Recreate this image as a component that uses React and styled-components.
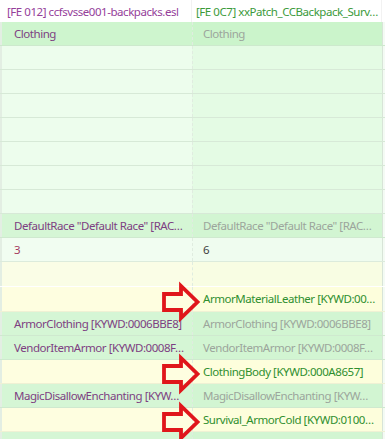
import React from "react";
import styled, { createGlobalStyle, css } from "styled-components";

const Global = createGlobalStyle`
  html, body { margin: 0; padding: 0; background: #ffffff; }
  body { font-family: "Noto Sans", "Open Sans", sans-serif; }
`;

const Table = styled.div`
  position: relative;
  width: 385px;
  height: 439px;
  overflow: hidden;
  background: #ffffff;
`;

const HeaderRow = styled.div`
  display: grid;
  grid-template-columns: 192px 190px 3px;
  height: 22px;
  background: #ffffff;
`;

const HeaderCell = styled.div`
  padding: 4px 0 0 ${(p) => p.$pad}px;
  font-size: 11.5px;
  letter-spacing: -0.45px;
  line-height: 16px;
  white-space: nowrap;
  overflow: hidden;
  color: ${(p) => (p.$side === "left" ? "#95409a" : "#3b9a3b")};
  border-right: 1px solid #f2f2f2;
`;

const tones = {
  clothing: css`
    --lbg: #cef5ce;
    --rbg: #cbf4cb;
    --line: #cde9cd;
  `,
  empty: css`
    --lbg: #edfded;
    --rbg: #e4fbe4;
    --line: #d7e9d7;
  `,
  green: css`
    --lbg: #d5f6d5;
    --rbg: #d2f5d2;
    --line: #cfe9cf;
  `,
  pale: css`
    --lbg: #f1fdf1;
    --rbg: #effcef;
    --line: #dcebdc;
  `,
  yellowTop: css`
    --lbg: #fafde6;
    --rbg: #f8fde3;
    --line: transparent;
  `,
  yellow: css`
    --lbg: #fefee0;
    --rbg: #fdfedc;
    --line: #eff1d4;
  `,
};

const Row = styled.div`
  ${(p) => tones[p.$tone]}
  position: relative;
  display: grid;
  grid-template-columns: 192px 190px 3px;
  height: ${(p) => p.$h}px;
  box-sizing: border-box;
  border-bottom: 1px solid var(--line);
`;

const Cell = styled.div`
  background: var(--lbg);
  padding-left: ${(p) => p.$pad}px;
  font-size: 11.5px;
  letter-spacing: -0.45px;
  line-height: ${(p) => p.$h - 1}px;
  white-space: nowrap;
  overflow: hidden;
  box-sizing: border-box;
  ${(p) => p.$side === "left" && css`border-left: 2px solid #e3eee3;`}
  ${(p) => p.$side === "right" && css`background: var(--rbg); border-left: 1px dashed #e0ece0;`}
  color: ${(p) =>
    ({
      purple: "#7d3f82",
      grey: "#9ca59c",
      green: "#2f8f2f",
      red: "#a33a5e",
      dark: "#3f3f3f",
    }[p.$kind] || "#333")};
`;

const Filler = styled.div`
  background: #f4fbf4;
  border-left: 1px solid #d8e4d8;
`;

const ArrowBox = styled.svg`
  position: absolute;
  left: 160px;
  top: ${(p) => p.$top}px;
  z-index: 2;
  overflow: visible;
`;

function Arrow({ top }) {
  return (
    <ArrowBox $top={top} width="40" height="36" viewBox="0 0 40 36">
      <path
        d="M4 10 L21 10 L21 2 L37.5 18 L21 34 L21 26 L4 26 Z"
        fill="none"
        stroke="#e0161b"
        strokeWidth="3.8"
        strokeLinejoin="miter"
      />
    </ArrowBox>
  );
}

const empty = { tone: "empty", left: "", right: "" };

const rows = [
  { tone: "clothing", left: "Clothing", right: "Clothing", lk: "purple", rk: "grey" },
  empty, empty, empty, empty, empty, empty, empty,
  {
    tone: "green",
    left: "DefaultRace \"Default Race\" [RAC…",
    right: "DefaultRace \"Default Race\" [RAC…",
    lk: "purple",
    rk: "grey",
  },
  { tone: "pale", left: "3", right: "6", lk: "red", rk: "dark" },
  { tone: "yellowTop", left: "", right: "", h: 25 },
  { tone: "yellow", left: "", right: "ArmorMaterialLeather [KYWD:00…", rk: "green", h: 25, arrow: true },
  { tone: "green", left: "ArmorClothing [KYWD:0006BBE8]", right: "ArmorClothing [KYWD:0006BBE8]", lk: "purple", rk: "grey" },
  { tone: "green", left: "VendorItemArmor [KYWD:0008F…", right: "VendorItemArmor [KYWD:0008F…", lk: "purple", rk: "grey" },
  { tone: "yellow", left: "", right: "ClothingBody [KYWD:000A8657]", rk: "green", arrow: true },
  { tone: "green", left: "MagicDisallowEnchanting [KYW…", right: "MagicDisallowEnchanting [KYW…", lk: "purple", rk: "grey" },
  { tone: "yellow", left: "", right: "Survival_ArmorCold [KYWD:0100…", rk: "green", arrow: true },
  { tone: "green", left: "", right: "" },
];

export default function App() {
  return (
    <>
      <Global />
      <Table>
        <HeaderRow>
          <HeaderCell $side="left" $pad={7}>[FE 012] ccfsvsse001-backpacks.esl</HeaderCell>
          <HeaderCell $side="right" $pad={4}>[FE 0C7] xxPatch_CCBackpack_Surv…</HeaderCell>
          <div />
        </HeaderRow>
        {rows.map((r, i) => {
          const h = r.h || 24;
          return (
            <Row key={i} $tone={r.tone} $h={h}>
              <Cell $side="left" $pad={12} $h={h} $kind={r.lk}>{r.left}</Cell>
              <Cell $side="right" $pad={10} $h={h} $kind={r.rk}>{r.right}</Cell>
              <Filler />
              {r.arrow && <Arrow top={Math.round(h / 2) - 16} />}
            </Row>
          );
        })}
      </Table>
    </>
  );
}
